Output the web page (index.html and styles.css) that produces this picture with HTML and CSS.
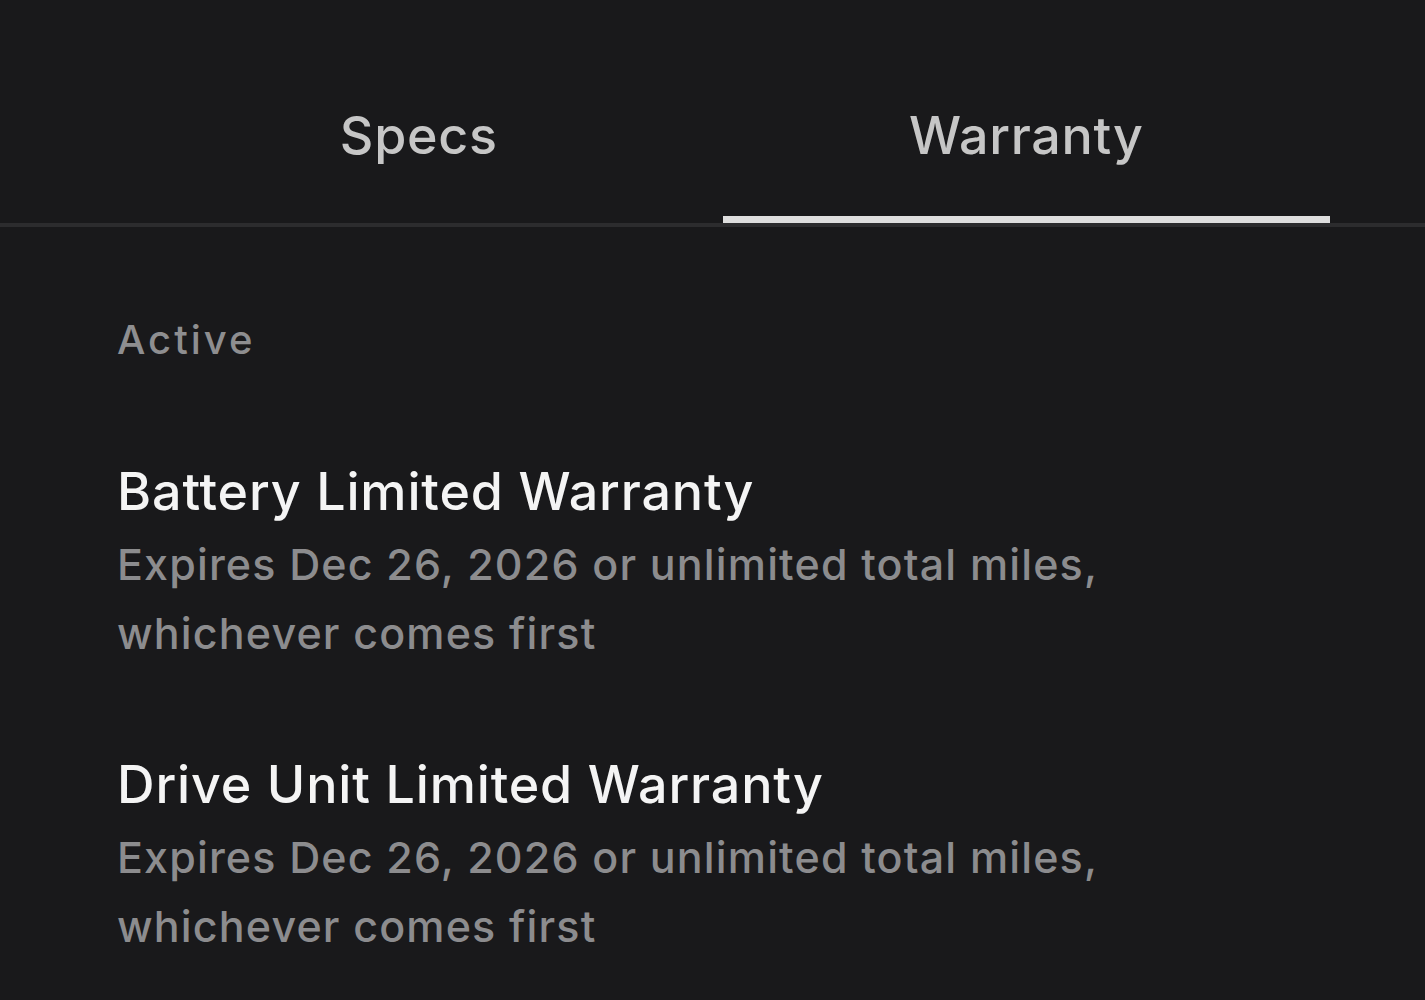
FILE: index.html
```html
<!DOCTYPE html>
<html>
  <head>
    <title>Warranty</title>
    <link rel="stylesheet" href="styles.css">
  </head>
  <body>
    <div class="tabs">
      <div class="tab">Specs</div>
      <div class="tab active">Warranty</div>
    </div>

    <div class="content">
      <p class="section-label">Active</p>

      <div class="warranty">
        <h2>Battery Limited Warranty</h2>
        <p>Expires Dec 26, 2026 or unlimited total miles,<br>whichever comes first</p>
      </div>

      <div class="warranty">
        <h2>Drive Unit Limited Warranty</h2>
        <p>Expires Dec 26, 2026 or unlimited total miles,<br>whichever comes first</p>
      </div>
    </div>
  </body>
</html>
```

FILE: styles.css
```css
body, html {
  height: 100%;
}
body {
  margin: 0;
  background-color: #19191b;
  font-family: Inter, 'Noto Sans', sans-serif;
  font-weight: 500;
  color: #f2f2f2;
}

.tabs {
  display: flex;
  padding: 0 95px 0 115px;
  border-bottom: 4px solid #2c2c2e;
}
.tab {
  flex: 1;
  text-align: center;
  font-size: 52px;
  line-height: 62px;
  letter-spacing: 0.7px;
  color: #c6c6c6;
  padding: 105px 0 49px;
  border-bottom: 7px solid transparent;
}
.tab.active {
  border-bottom-color: #dedede;
}

.content {
  padding: 89px 0 0 117px;
}
.section-label {
  margin: 0 0 97px 0;
  font-size: 40px;
  line-height: 48px;
  letter-spacing: 3px;
  color: #8e8e90;
}
.warranty {
  margin-bottom: 86px;
}
.warranty h2 {
  margin: 0 0 7px 0;
  font-size: 52px;
  font-weight: 500;
  line-height: 62px;
  letter-spacing: 0.85px;
  color: #f4f4f4;
}
.warranty p {
  margin: 0;
  font-size: 43px;
  line-height: 69px;
  letter-spacing: 1.15px;
  color: #8c8c8e;
}
```
